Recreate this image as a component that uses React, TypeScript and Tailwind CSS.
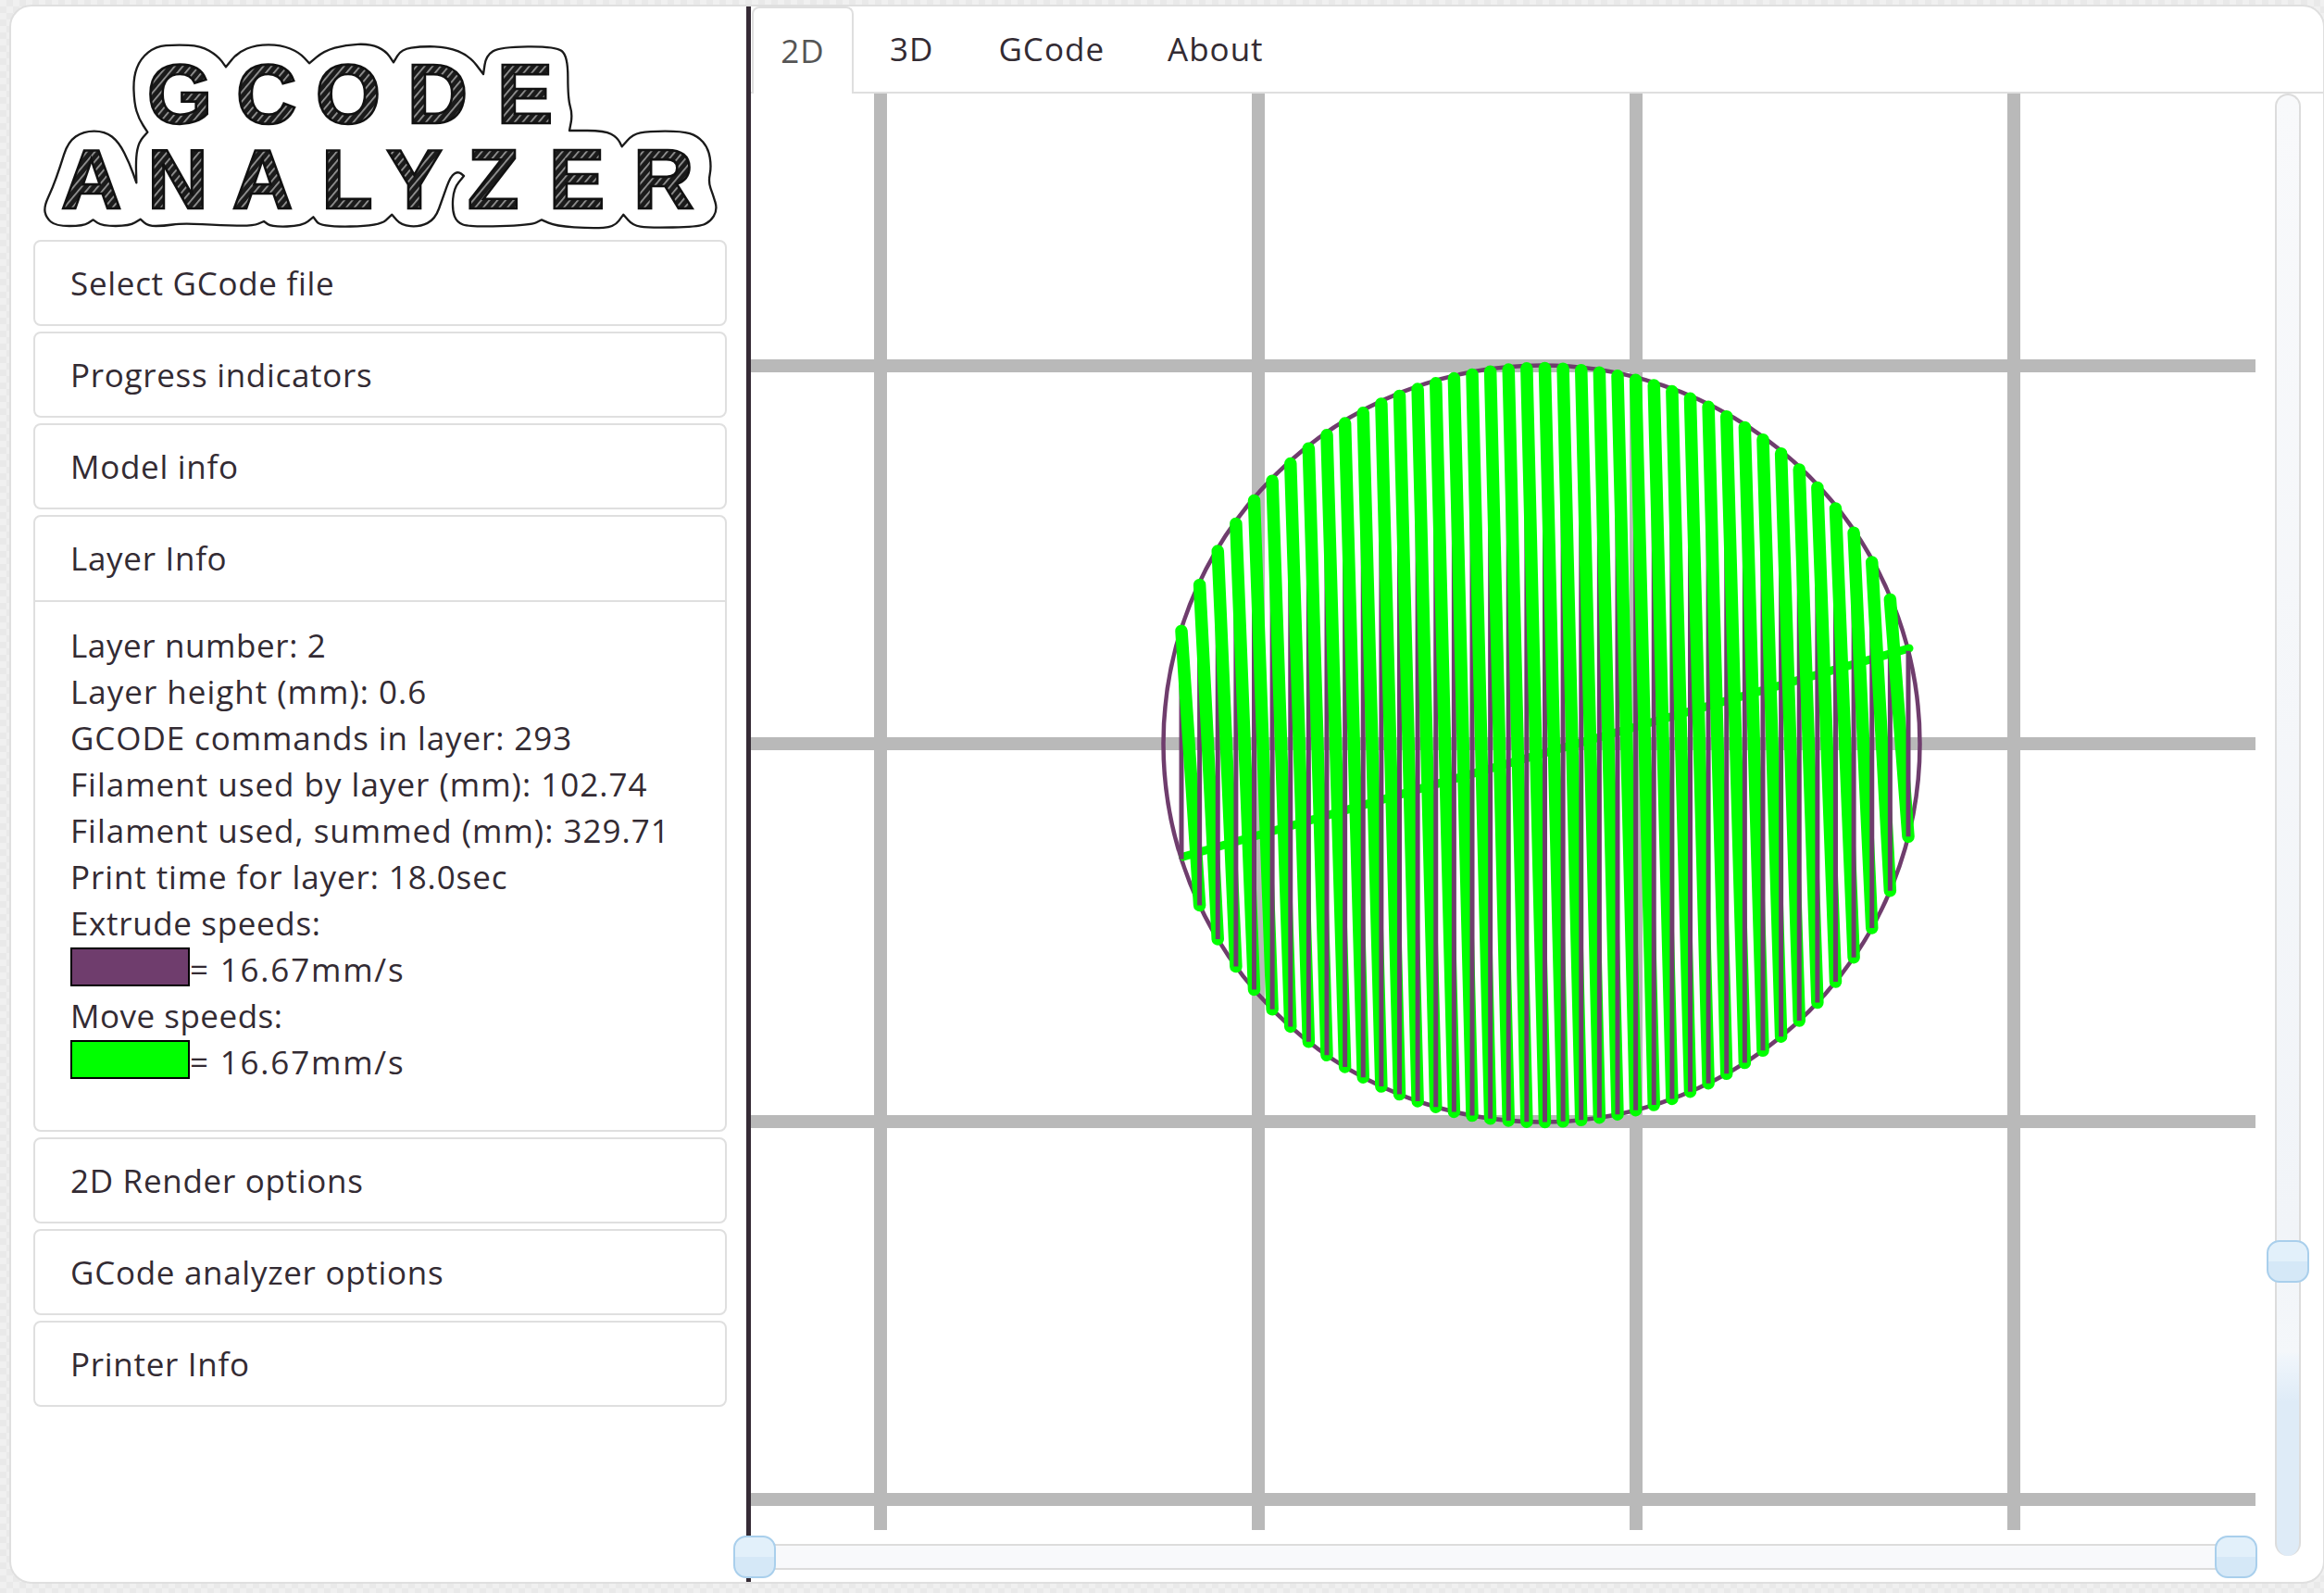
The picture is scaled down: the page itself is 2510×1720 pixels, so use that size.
const PURPLE = '#6f3d6d'
const GREEN = '#00ff00'
const GRID_X = [951, 1359, 1767, 2175]
const GRID_Y = [395, 803, 1211, 1619]
const CX = 1665
const CY = 803
const R = 408.5
const LINE_COUNT = 41

function lineX(i: number) {
  return 1276 + i * 19.625
}

function halfHeight(x: number) {
  return Math.sqrt(R * R - (x - CX) * (x - CX))
}

// outline round the logo, traced from the reference; a repeated point gives a sharp notch
const BLOB: [number, number][] = [
  [358, 308], [358, 308], [330, 265], [315, 215], [312, 130], [335, 70], [385, 30], [450, 25], [530, 28], [585, 60],
  [612, 97], [612, 97], [650, 50], [710, 25], [790, 25], [850, 50], [882, 85], [882, 85], [930, 45], [1000, 25],
  [1080, 22], [1130, 45], [1155, 82], [1155, 82], [1180, 40], [1245, 30], [1330, 32], [1400, 60], [1446, 120],
  [1446, 120], [1455, 60], [1500, 32], [1680, 30], [1720, 60], [1720, 200], [1735, 250], [1725, 303], [1725, 303],
  [1840, 303], [1880, 325], [1895, 355], [1895, 355], [1930, 315], [1980, 305], [2090, 305], [2140, 320], [2175, 360],
  [2185, 420], [2175, 470], [2190, 510], [2205, 560], [2180, 600], [2140, 615], [1980, 618], [1930, 610], [1900, 575],
  [1900, 575], [1870, 615], [1800, 620], [1680, 612], [1635, 592], [1635, 592], [1600, 610], [1400, 615], [1360, 600],
  [1345, 560], [1350, 490], [1383, 450], [1383, 450], [1365, 435], [1340, 450], [1315, 520], [1290, 590], [1240, 615],
  [1180, 610], [1150, 575], [1150, 575], [1110, 612], [920, 615], [895, 583], [895, 583], [860, 612], [760, 615],
  [735, 597], [735, 597], [700, 612], [600, 610], [470, 603], [410, 612], [360, 612], [335, 590], [335, 590], [300, 612],
  [210, 612], [182, 592], [182, 592], [150, 612], [60, 612], [30, 585], [22, 550], [50, 490], [75, 420], [100, 340],
  [150, 305], [220, 305], [265, 340], [300, 410], [322, 472], [322, 472], [320, 390], [330, 340],
]

function blobPath() {
  const mid = (a: [number, number], b: [number, number]) => `${(a[0] + b[0]) / 2} ${(a[1] + b[1]) / 2}`
  let d = `M${mid(BLOB[BLOB.length - 1], BLOB[0])}`
  BLOB.forEach((p, i) => {
    d += ` Q${p[0]} ${p[1]} ${mid(p, BLOB[(i + 1) % BLOB.length])}`
  })
  return d + ' Z'
}

function Logo() {
  return (
    <svg width="740" height="215" viewBox="0 0 2220 645" className="ml-[4px] block">
      <defs>
        <pattern id="hatch" width="20" height="20" patternUnits="userSpaceOnUse" patternTransform="rotate(40)">
          <rect width="20" height="20" fill="#1b1b1b" />
          <rect width="5" height="20" fill="#9a9a9a" />
        </pattern>
      </defs>
      <path d={blobPath()} fill="#ffffff" stroke="#1a1a1a" strokeWidth="7" strokeLinejoin="round" />
      <g fill="url(#hatch)" stroke="#111111" strokeWidth="8" fontFamily="'Liberation Sans', sans-serif" fontWeight="700" fontSize="272">
        <text x="356 645 902 1199 1490" y="278">GCODE</text>
        <text x="78 358 632 922 1132 1395 1658 1932" y="556">ANALYZER</text>
      </g>
    </svg>
  )
}

function Canvas() {
  return (
    <svg width="1625" height="1551" viewBox="811 101 1625 1551" className="block blur-[0.7px]">
      {GRID_X.map((x) => (
        <line key={x} x1={x} x2={x} y1={101} y2={1652} stroke="#b9b9b9" strokeWidth="14" />
      ))}
      {GRID_Y.map((y) => (
        <line key={y} x1={811} x2={2436} y1={y} y2={y} stroke="#b9b9b9" strokeWidth="14" />
      ))}
      <circle cx={CX} cy={CY} r={R} fill="none" stroke={PURPLE} strokeWidth="4.5" />
      <line x1={2062} y1={700} x2={1278} y2={925} stroke={GREEN} strokeWidth="9" strokeLinecap="round" />
      {Array.from({ length: LINE_COUNT }, (_, i) => {
        const x = lineX(i)
        const h = halfHeight(x)
        const next = lineX(i + 1)
        return (
          <g key={i}>
            <line x1={x} x2={x} y1={CY + h} y2={CY - h} stroke={PURPLE} strokeWidth="5" />
            {i < LINE_COUNT - 1 && (
              <line x1={x} y1={CY - h + 3} x2={next} y2={CY + halfHeight(next)} stroke={GREEN} strokeWidth="13.5" strokeLinecap="round" />
            )}
          </g>
        )
      })}
    </svg>
  )
}

function Handle({ className }: { className: string }) {
  return (
    <div className={`absolute h-[46px] w-[46px] rounded-[14px] border-2 border-[#a9cfec] bg-[linear-gradient(#e2f0fa_0%,#e2f0fa_50%,#d5e8f7_50%,#d5e8f7_100%)] ${className}`} />
  )
}

function Card({ title, children }: { title: string; children?: React.ReactNode }) {
  return (
    <div className="rounded-[8px] border-2 border-[#dfdfdf] bg-white">
      <div className={`flex items-center pl-[38px] tracking-[0.7px] ${children ? 'h-[92px] border-b-2 border-[#dfdfdf]' : 'h-[89px]'}`}>{title}</div>
      {children}
    </div>
  )
}

function SpeedRow({ color }: { color: string }) {
  return (
    <div className="flex h-[50px]">
      <div className="mt-[1px] h-[42px] w-[129px] border-2 border-black" style={{ backgroundColor: color }} />
      <span className="tracking-[1.8px]">= 16.67mm/s</span>
    </div>
  )
}

export default function App() {
  return (
    <div className="h-[1720px] w-[2510px] overflow-hidden bg-[#ececec] bg-[repeating-conic-gradient(#e9e9e9_0_25%,#f0f0f0_0_50%)] bg-[length:14px_14px] pt-[5px] pl-[10px] text-[35px] leading-[50px] tracking-[1px] text-[#332b33] [font-family:'Open_Sans',sans-serif]">
      <div className="flex h-[1705px] w-[2501px] overflow-hidden rounded-[24px] border-2 border-[#dfdfdf] bg-white">
        <div className="w-[794px] shrink-0 pl-[24px]">
          <div className="pt-[33px] pb-[4px]">
            <Logo />
          </div>
          <div className="flex w-[749px] flex-col gap-[6px]">
            <Card title="Select GCode file" />
            <Card title="Progress indicators" />
            <Card title="Model info" />
            <Card title="Layer Info">
              <div className="pt-[22px] pb-[48px] pl-[38px]">
                <div className="tracking-[0.6px]">Layer number: 2</div>
                <div>Layer height (mm): 0.6</div>
                <div className="tracking-[0.9px]">GCODE commands in layer: 293</div>
                <div>Filament used by layer (mm): 102.74</div>
                <div>Filament used, summed (mm): 329.71</div>
                <div className="tracking-[0.9px]">Print time for layer: 18.0sec</div>
                <div className="tracking-[0.65px]">Extrude speeds:</div>
                <SpeedRow color={PURPLE} />
                <div className="tracking-[0.5px]">Move speeds:</div>
                <SpeedRow color={GREEN} />
              </div>
            </Card>
            <Card title="2D Render options" />
            <Card title="GCode analyzer options" />
            <Card title="Printer Info" />
          </div>
        </div>

        <div className="w-[5px] shrink-0 bg-[#352b35]" />

        <div className="flex min-w-0 flex-1 flex-col">
          <div className="flex h-[94px] shrink-0 gap-[6px] border-b-2 border-[#dfdfdf] pl-px">
            <div className="mb-[-2px] flex h-[94px] w-[110px] items-center justify-center rounded-t-[8px] border-2 border-b-0 border-[#dfdfdf] bg-white text-[#555555]">2D</div>
            <div className="flex items-center pr-[32px] pl-[33px]">3D</div>
            <div className="flex items-center px-[32px]">GCode</div>
            <div className="flex items-center pr-[32px] pl-[30px]">About</div>
          </div>
          <div className="flex">
            <div className="w-[1625px]">
              <Canvas />
              <div className="relative mt-[15px] ml-[4px] h-[28px] w-[1600px] border-y-2 border-[#dcdcdc] bg-[#f8f9fb]">
                <Handle className="top-[-11px] left-[-23px]" />
                <Handle className="top-[-11px] right-[-23px]" />
              </div>
            </div>
            <div className="relative ml-[21px] h-[1579px] w-[28px] rounded-[14px] border-x-2 border-t-2 border-[#dcdcdc] bg-[linear-gradient(#f8f9fb_0%,#f1f4f8_78%,#f4f7fa_86%,#eff5fb_86.5%,#deebf7_89.5%,#deebf7_100%)]">
              <Handle className="top-[1236px] left-[-11px]" />
            </div>
          </div>
        </div>
      </div>
    </div>
  )
}
